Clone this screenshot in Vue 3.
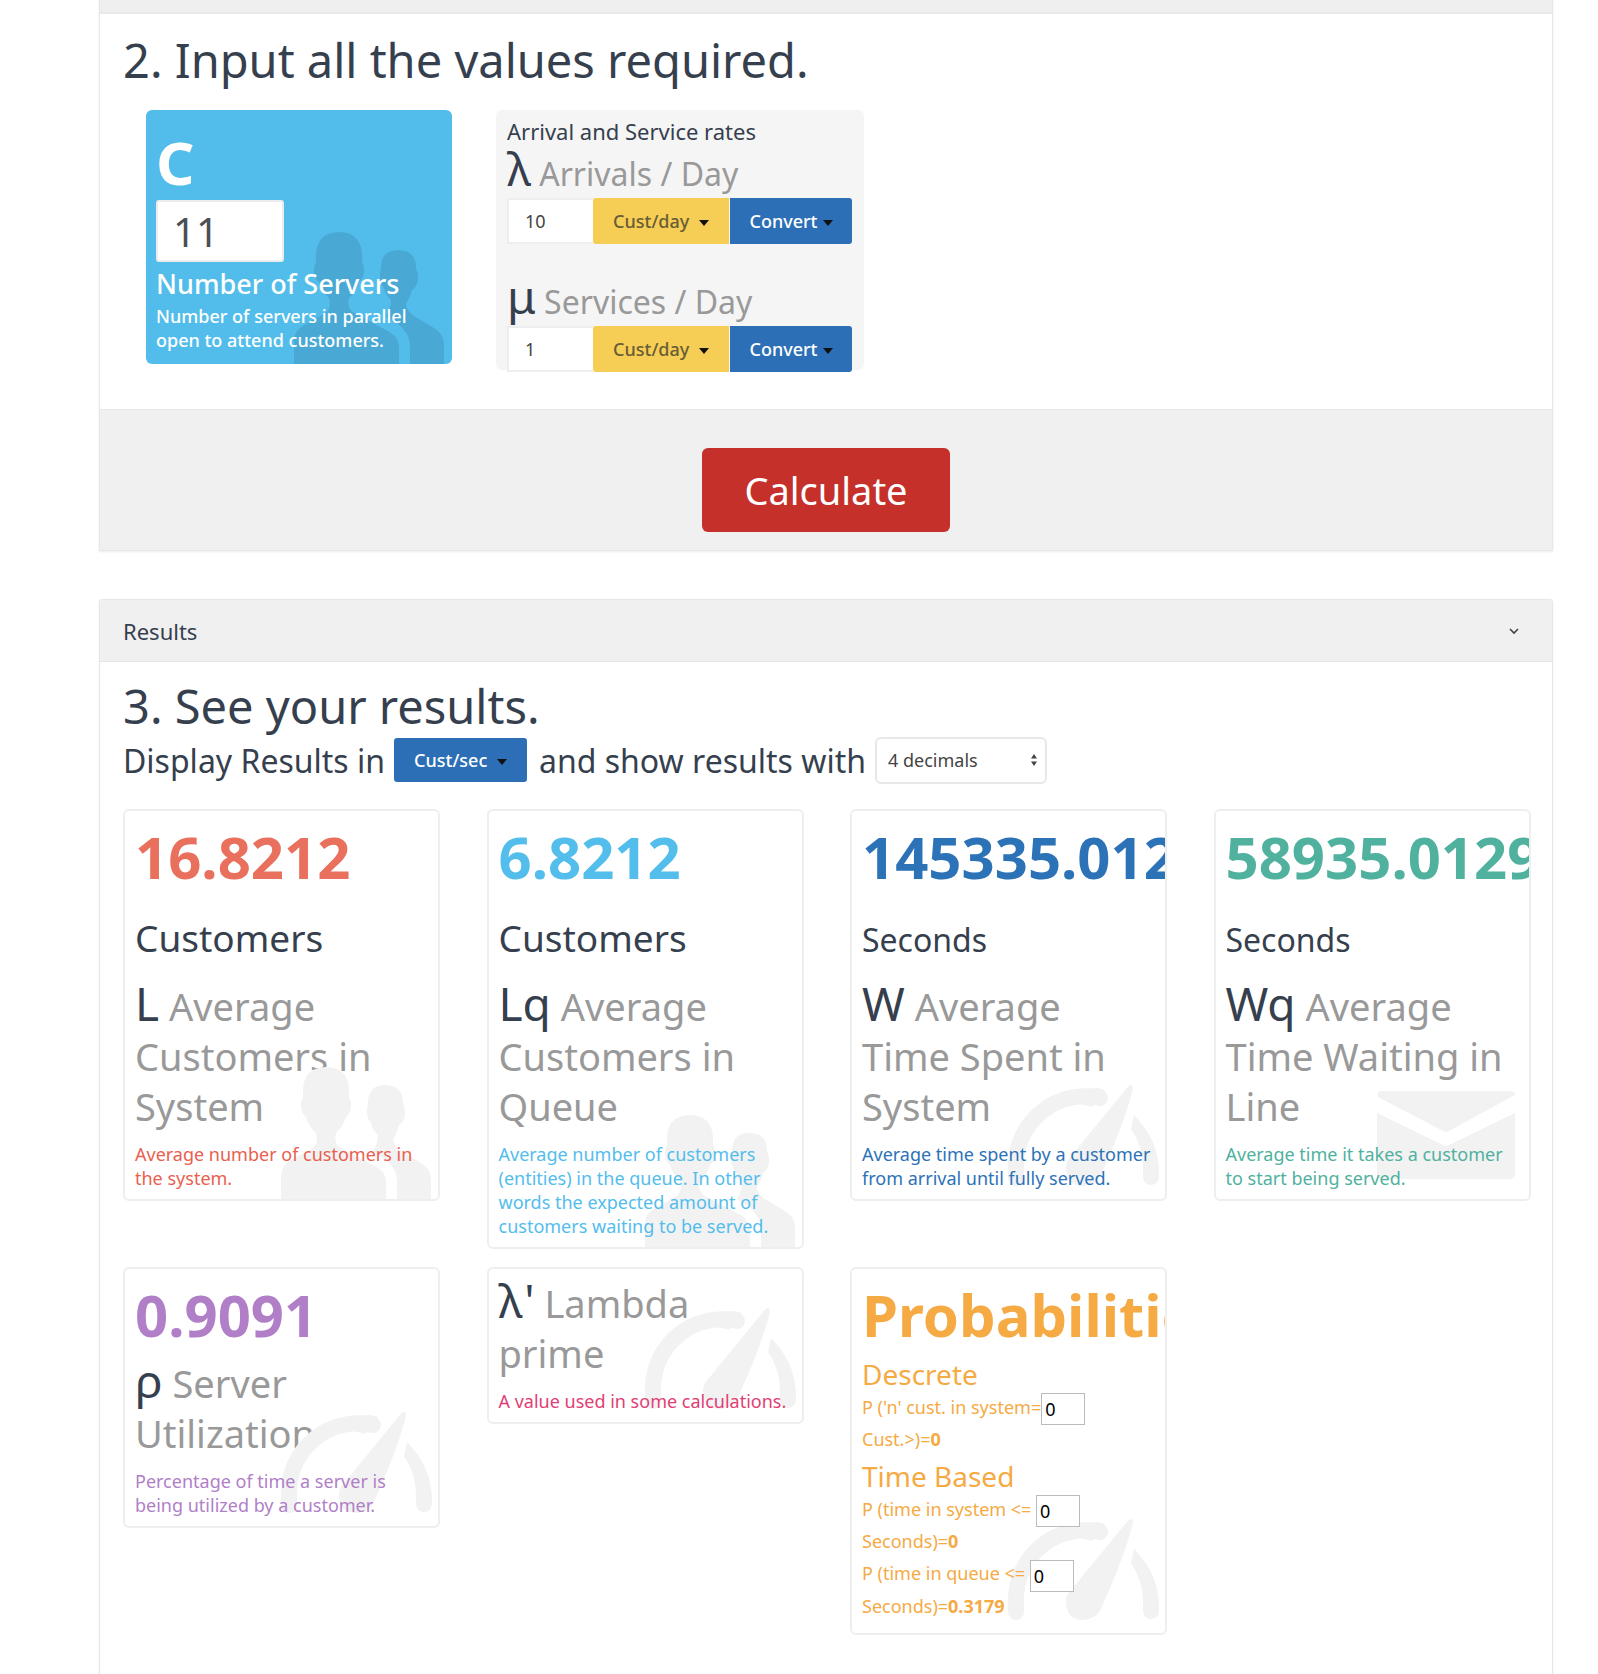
<template>
  <div class="page">
    <!-- step 2 panel -->
    <section class="panel first">
      <div class="panel-stub"></div>
      <div class="panel-body input-body">
        <h1 class="step-title">2. Input all the values required.</h1>
        <div class="inputs-row">
          <div class="server-box">
            <svg class="box-icon" viewBox="0 0 150 132"><use href="#people-shape" /></svg>
            <div class="server-letter">C</div>
            <input class="server-input" type="text" value="11" />
            <div class="server-name">Number of Servers</div>
            <div class="server-text">Number of servers in parallel<br />open to attend customers.</div>
          </div>
          <div class="rates-box">
            <div class="rates-title">Arrival and Service rates</div>
            <template v-for="rate in rates" :key="rate.symbol">
              <div class="rate-label" :class="rate.cls"><span class="symbol">{{ rate.symbol }}</span> {{ rate.label }}</div>
              <div class="rate-controls">
                <input class="rate-input" type="text" :value="rate.value" />
                <button class="btn-yellow">Cust/day <span class="caret"></span></button>
                <button class="btn-blue">Convert<span class="caret tight"></span></button>
              </div>
            </template>
          </div>
        </div>
      </div>
      <div class="panel-footer">
        <button class="calc-button">Calculate</button>
      </div>
    </section>

    <!-- results panel -->
    <section class="panel results">
      <div class="results-head">
        <span>Results</span>
        <svg class="chevron" viewBox="0 0 12 8"><path d="M2 2l4 4 4-4" fill="none" stroke="#444" stroke-width="1.6" /></svg>
      </div>
      <div class="results-body">
        <h1 class="step-title see">3. See your results.</h1>
        <div class="display-row">
          <span>Display Results in</span>
          <button class="btn-blue cust-sec">Cust/sec <span class="caret"></span></button>
          <span>and show results with</span>
          <div class="select-wrap">
            <select class="decimals"><option>4 decimals</option></select>
            <svg class="select-arrows" viewBox="0 0 8 14"><path d="M4 1l3 4.500H1zM4 13l3-4.500H1z" fill="#444" /></svg>
          </div>
        </div>

        <div class="cards">
          <div v-for="card in cards" :key="card.symbol" class="card" :class="card.cls">
            <svg v-if="card.icon === 'people'" class="card-icon people" viewBox="0 0 150 132"><use href="#people-shape" /></svg>
            <svg v-if="card.icon === 'gauge'" class="card-icon gauge" viewBox="0 0 151 101"><use href="#gauge-shape" /></svg>
            <svg v-if="card.icon === 'mail'" class="card-icon mail" viewBox="0 0 138 88"><use href="#mail-shape" /></svg>
            <div v-if="card.value" class="value" :style="{ color: card.color }">{{ card.value }}</div>
            <div v-if="card.unit" class="unit"><span :class="{ seconds: card.unit === 'Seconds' }">{{ card.unit }}</span></div>
            <h3 class="metric"><span class="symbol">{{ card.symbol }}</span> {{ card.name }}</h3>
            <p class="note" :style="{ color: card.noteColor || card.color }">{{ card.note }}</p>
          </div>

          <div class="card prob">
            <svg class="card-icon gauge" viewBox="0 0 151 101"><use href="#gauge-shape" /></svg>
            <div class="value prob-title">Probabilities</div>
            <h4 class="prob-head">Descrete</h4>
            <p class="prob-line">P ('n' cust. in system=<input class="prob-input" type="text" value="0" /><br />Cust.&gt;)=<b>0</b></p>
            <h4 class="prob-head second">Time Based</h4>
            <p class="prob-line">P (time in system &lt;= <input class="prob-input" type="text" value="0" /><br />Seconds)=<b>0</b></p>
            <p class="prob-line">P (time in queue &lt;= <input class="prob-input" type="text" value="0" /><br />Seconds)=<b>0.3179</b></p>
          </div>
        </div>
      </div>
    </section>

    <!-- shared icon shapes -->
    <svg class="defs" width="0" height="0">
      <defs>
        <g id="people-shape">
          <path d="M0 132V108Q0 98 12 92L30 82Q38 78 35 66Q28 60 25 50Q20 46 20 38Q20 33 22 30Q20 0 45 0Q70 0 68 30Q70 33 70 38Q70 46 65 50Q62 60 55 66Q52 78 62 82L92 98Q105 104 105 116V132Z" />
          <path d="M116 132V114Q116 102 104 92L92 84Q97 76 97 68Q92 64 90 56Q86 52 86 44Q86 40 87 36Q87 18 104 18Q122 18 122 36Q124 40 124 46Q124 54 118 58Q116 66 112 72Q112 78 120 84L140 96Q150 102 150 112L151 132Z" />
        </g>
        <g id="gauge-shape">
          <path d="M8 93V80A69 69 0 0 1 92 13" fill="none" stroke="currentColor" stroke-width="16" stroke-linecap="round" />
          <path d="M90 3L97 5L84 22Q80 20 74 20L76 4Z" />
          <path d="M126 30Q151 55 151 88V92A8 8 0 0 1 135 92V82Q135 62 123 44Z" />
          <path d="M123 0Q126 0 124 8C115 40 105 62 93 90Q87 101 75 101Q58 101 58 82Q58 76 64 70L118 4Q121 0 123 0Z" />
        </g>
        <g id="mail-shape">
          <path d="M4 0H134Q138 0 138 4L72 40Q69 42 66 40L1 6Q0 0 4 0Z" />
          <path d="M0 22L66 54Q69 56 72 54L138 22V82Q138 88 132 88H6Q0 88 0 82Z" />
        </g>
      </defs>
    </svg>
  </div>
</template>

<script setup>
// input rates
const rates = [
  { symbol: 'λ', label: 'Arrivals / Day', value: '10', cls: 'rate-one' },
  { symbol: 'μ', label: 'Services / Day', value: '1', cls: 'rate-two' }
]

// result cards
const cards = [
  { symbol: 'L', name: 'Average Customers in System', value: '16.8212', unit: 'Customers', color: '#e8705c', noteColor: '#e9604f', icon: 'people', note: 'Average number of customers in the system.' },
  { symbol: 'Lq', name: 'Average Customers in Queue', value: '6.8212', unit: 'Customers', color: '#53bdec', icon: 'people', note: 'Average number of customers (entities) in the queue. In other words the expected amount of customers waiting to be served.' },
  { symbol: 'W', name: 'Average Time Spent in System', value: '145335.0129', unit: 'Seconds', color: '#2c72b7', icon: 'gauge', note: 'Average time spent by a customer from arrival until fully served.' },
  { symbol: 'Wq', name: 'Average Time Waiting in Line', value: '58935.0129', unit: 'Seconds', color: '#4fb19e', icon: 'mail', note: 'Average time it takes a customer to start being served.' },
  { symbol: 'ρ', name: 'Server Utilization', value: '0.9091', color: '#b07fc7', icon: 'gauge', note: 'Percentage of time a server is being utilized by a customer.' },
  { symbol: "λ'", name: 'Lambda prime', color: '#e23e74', icon: 'gauge', cls: 'no-value', note: 'A value used in some calculations.' }
]
</script>

<style>
html, body {
  background: #fff;
}
</style>

<style scoped>
.page {
  height: 1674px;
  overflow: hidden;
  padding: 0 45px 0 99px;
  font-family: "Noto Sans", "Open Sans", sans-serif;
  color: #363f4e;
  box-sizing: border-box;
}
.defs {
  position: absolute;
}
.panel {
  border: 1px solid #e7e7e7;
  border-top: none;
  box-shadow: 0 1px 2px rgba(0, 0, 0, 0.08);
  background: #fff;
}
.panel-stub {
  height: 12px;
  background: #efefef;
  border-bottom: 2px solid #e9e9e9;
}
.input-body {
  height: 395px;
  padding: 0 23px;
  box-sizing: border-box;
}
.step-title {
  margin: 0;
  font-size: 47px;
  font-weight: 400;
  line-height: 64px;
  padding-top: 14px;
}
.inputs-row {
  display: flex;
  align-items: flex-start;
  gap: 44px;
  padding: 18px 0 0 23px;
}
.server-box {
  position: relative;
  width: 306px;
  height: 254px;
  background: #52bdeb;
  border-radius: 6px;
  color: #fff;
  padding: 14px 10px 0;
  box-sizing: border-box;
  overflow: hidden;
}
.box-icon {
  position: absolute;
  left: 148px;
  bottom: 0;
  width: 150px;
  height: 132px;
  fill: #4aa9d4;
}
.server-letter,
.server-input,
.server-name,
.server-text {
  position: relative;
}
.server-letter {
  font-size: 60px;
  font-weight: 700;
  line-height: 76px;
}
.server-input {
  display: block;
  width: 128px;
  height: 62px;
  border: 2px solid #ececec;
  border-radius: 3px;
  background: #fff;
  padding: 0 0 0 15px;
  box-sizing: border-box;
  font: 400 40px "Noto Sans", sans-serif;
  color: #4b4f56;
}
.server-name {
  font-size: 27px;
  line-height: 40px;
  margin-top: 2px;
  font-weight: 500;
}
.server-text {
  font-size: 18px;
  line-height: 24px;
  font-weight: 500;
}
.rates-box {
  width: 368px;
  height: 260px;
  background: #f5f5f5;
  border-radius: 6px;
  padding: 6px 12px 0 11px;
  box-sizing: border-box;
}
.rates-title {
  font-size: 22px;
  line-height: 30px;
}
.rate-label {
  font-size: 32px;
  line-height: 44px;
  color: #999;
  white-space: nowrap;
}
.rate-two {
  margin-top: 30px;
}
.symbol {
  color: #363f4e;
}
.rate-label .symbol {
  font-size: 46px;
}
.rate-controls {
  display: flex;
  height: 46px;
  margin-top: 2px;
}
.rate-input {
  width: 86px;
  border: 2px solid #eee;
  border-right: none;
  background: #fff;
  padding: 0 0 0 16px;
  box-sizing: border-box;
  font: 400 18px "Noto Sans", sans-serif;
  color: #444;
}
.btn-yellow,
.btn-blue {
  border: none;
  font: 500 18px "Noto Sans", sans-serif;
  padding: 0;
}
.btn-yellow {
  width: 136px;
  background: #f6ce55;
  color: #6a5c36;
  border-radius: 3px 0 0 3px;
}
.btn-blue {
  width: 122px;
  background: #2c6fb6;
  color: #fff;
  border-radius: 0 3px 3px 0;
  margin-left: 1px;
}
.caret {
  display: inline-block;
  width: 0;
  height: 0;
  margin-left: 5px;
  vertical-align: middle;
  border-top: 6px solid #111;
  border-left: 5px solid transparent;
  border-right: 5px solid transparent;
}
.caret.tight {
  margin-left: 5px;
}
.panel-footer {
  height: 141px;
  background: #f0f0f0;
  border-top: 1px solid #e8e8e8;
  display: flex;
  justify-content: center;
  padding-top: 38px;
  box-sizing: border-box;
}
.calc-button {
  width: 248px;
  height: 84px;
  background: #c5302b;
  border: none;
  border-radius: 6px;
  color: #fff;
  font: 400 38px "Noto Sans", sans-serif;
}
.results {
  margin-top: 48px;
  min-height: 1100px;
  border-top: 1px solid #e7e7e7;
  border-radius: 3px 3px 0 0;
}
.results-head {
  height: 62px;
  background: #f0f0f0;
  border-bottom: 1px solid #e5e5e5;
  display: flex;
  align-items: center;
  justify-content: space-between;
  padding: 0 32px 0 23px;
  font-size: 22px;
  box-sizing: border-box;
}
.chevron {
  width: 12px;
  height: 8px;
}
.results-body {
  padding: 0 23px;
}
.see {
  padding-top: 12px;
}
.display-row {
  display: flex;
  align-items: center;
  gap: 9px;
  font-size: 32px;
  height: 46px;
  margin-top: -1px;
  white-space: nowrap;
}
.cust-sec {
  width: 133px;
  height: 44px;
  border-radius: 3px;
  margin-left: 0;
}
.cust-sec + span {
  margin-left: 3px;
}
.select-wrap {
  position: relative;
  margin-left: 0;
}
.decimals {
  display: block;
  width: 172px;
  height: 47px;
  appearance: none;
  border: 2px solid #e8e8e8;
  border-radius: 6px;
  background: #fff;
  padding: 0 0 0 11px;
  font: 400 18px "Noto Sans", sans-serif;
  color: #444;
}
.select-arrows {
  position: absolute;
  right: 9px;
  top: 14px;
  width: 8px;
  height: 18px;
}
.cards {
  display: grid;
  grid-template-columns: repeat(4, 317px);
  column-gap: 46.500px;
  row-gap: 18px;
  align-items: start;
  margin-top: 26px;
}
.card {
  position: relative;
  border: 2px solid #eee;
  border-radius: 6px;
  padding: 0 10px 9px;
  box-sizing: border-box;
  overflow: hidden;
}
.card-icon {
  position: absolute;
  fill: #f2f2f2;
  color: #f2f2f2;
  z-index: 1;
}
.people {
  right: 7px;
  bottom: 0;
  width: 150px;
  height: 132px;
}
.gauge {
  right: 6px;
  bottom: 13px;
  width: 151px;
  height: 101px;
}
.mail {
  right: 14px;
  bottom: 20px;
  width: 138px;
  height: 88px;
}
.no-value .gauge {
  bottom: 13px;
}
.value {
  font-size: 58px;
  font-weight: 700;
  line-height: 80px;
  padding-top: 6px;
  white-space: nowrap;
}
.unit {
  font-size: 37px;
  line-height: 81px;
  height: 81px;
}
.unit .seconds {
  font-size: 32px;
}
.metric {
  margin: 0;
  font-size: 38px;
  font-weight: 400;
  line-height: 50px;
  color: #999;
}
.metric .symbol {
  font-size: 46px;
}
.no-value .metric {
  padding-top: 6px;
}
.note {
  position: relative;
  z-index: 2;
  margin: 0;
  font-size: 18px;
  line-height: 24px;
  padding-top: 11px;
}
.prob {
  color: #f5aa44;
}
.prob-title {
  color: #f5aa44;
}
.prob-head {
  position: relative;
  z-index: 2;
  margin: 0;
  font-size: 28px;
  font-weight: 400;
  line-height: 38px;
}
.prob-head.second {
  margin-top: 0;
}
.prob-line {
  position: relative;
  z-index: 2;
  margin: 0 0 4px;
  font-size: 18px;
  line-height: 28px;
}
.prob-input {
  width: 44px;
  height: 32px;
  border: 1px solid #bbb;
  background: #fff;
  padding: 0 0 0 3px;
  box-sizing: border-box;
  font: 400 18px "Noto Sans", sans-serif;
  color: #000;
  vertical-align: middle;
}
</style>
